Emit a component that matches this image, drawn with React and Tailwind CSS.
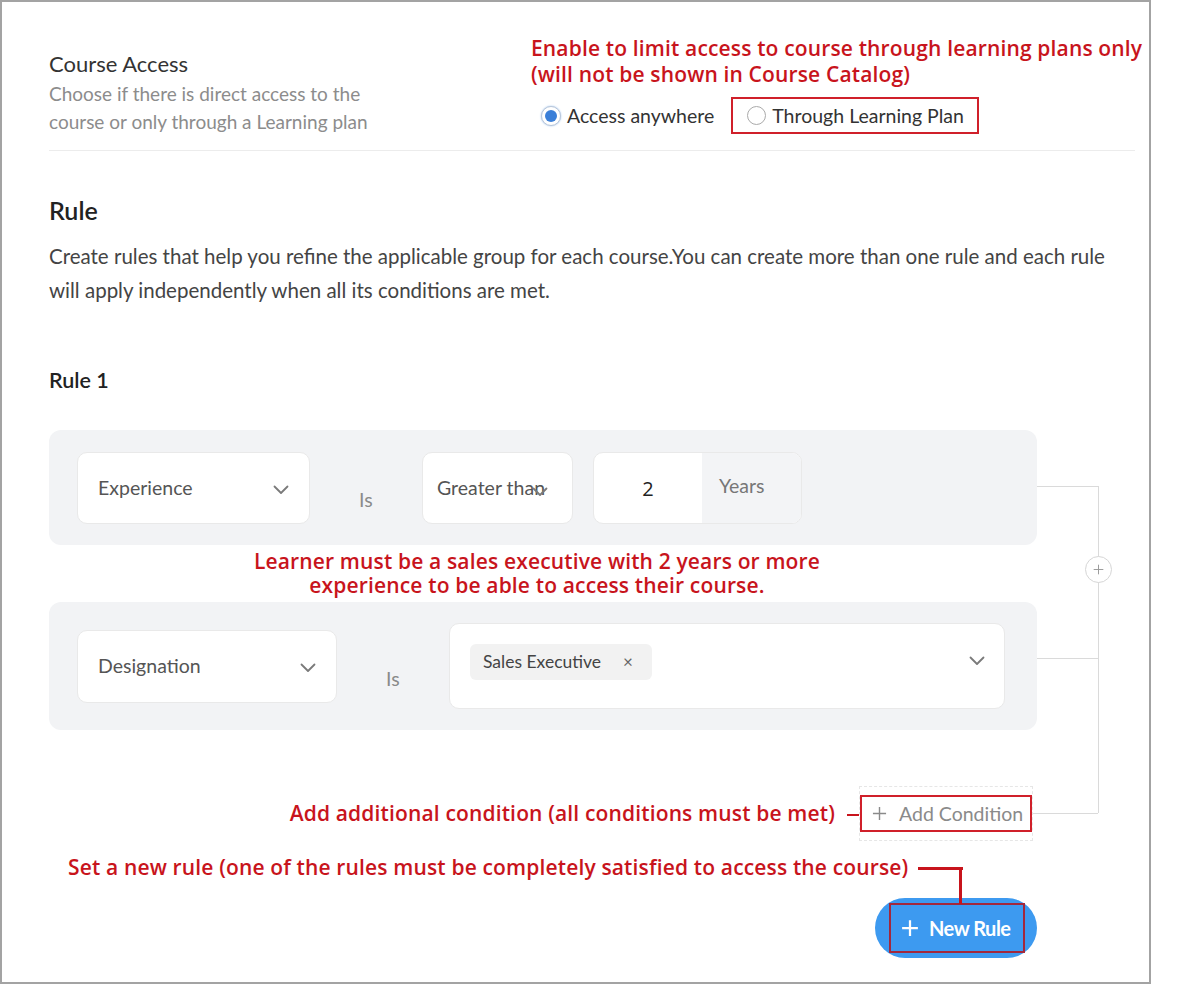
import React from 'react';

const Chevron = ({ className = '' }) => (
  <svg width="16" height="10" viewBox="0 0 16 10" fill="none" className={className}>
    <path d="M1.5 1.5 8 8l6.5-6.5" stroke="#7a7a7a" strokeWidth="1.8" strokeLinecap="round" strokeLinejoin="round" />
  </svg>
);

const Plus = ({ size, color, stroke }) => (
  <svg width={size} height={size} viewBox="0 0 16 16" fill="none">
    <path d="M8 1v14M1 8h14" stroke={color} strokeWidth={stroke} />
  </svg>
);

const Select = ({ label, className = '' }) => (
  <div
    className={`flex h-[72px] items-center justify-between rounded-[10px] border border-[#e9e9e9] bg-white pl-[20px] pr-[20px] ${className}`}
  >
    <span className="text-[19.5px] text-[#555]">{label}</span>
    <Chevron className="mt-[4px] shrink-0" />
  </div>
);

const IsLabel = () => (
  <div className="w-[112px] pl-[49px] pt-[25px] text-[19.5px] text-[#8a8a8a]">Is</div>
);

export default function App() {
  return (
    <div className="h-[984px] w-[1188px] bg-white font-['Lato',sans-serif]">
      <div className="h-[984px] w-[1151px] border-2 border-[#a3a3a3] pl-[47px] pt-[33px]">
        {/* Course access */}
        <div className="flex">
          <div className="w-[482px] pt-[15px]">
            <h3 className="text-[22px] leading-[28px] text-[#333]">Course Access</h3>
            <p className="mt-[2px] text-[19px] leading-[28px] text-[#8c8c8c]">
              Choose if there is direct access to the
              <br />
              course or only through a Learning plan
            </p>
          </div>
          <div>
            <p className="font-['Open_Sans',sans-serif] text-[21px] font-semibold leading-[26px] tracking-[0.15px] text-[#c8141c]">
              Enable to limit access to course through learning plans only
              <br />
              (will not be shown in Course Catalog)
            </p>
            <div className="mt-[10px] flex h-[37px] items-center">
              <label className="ml-[10px] flex items-center gap-[6px]">
                <span className="flex h-[20px] w-[20px] items-center justify-center rounded-full border border-[#b9c6d8] bg-white shadow-[0_0_2px_#9cc0ee]">
                  <span className="h-[12px] w-[12px] rounded-full bg-[#3b7fd8]" />
                </span>
                <span className="text-[19.5px] text-[#333]">Access anywhere</span>
              </label>
              <label className="ml-[17px] flex h-[37px] w-[248px] items-center gap-[6px] border-2 border-[#d0202a] pl-[14px]">
                <span className="h-[19px] w-[19px] rounded-full border border-[#aaa] bg-white" />
                <span className="text-[19.5px] text-[#333]">Through Learning Plan</span>
              </label>
            </div>
          </div>
        </div>
        <div className="mt-[14px] h-px w-[1086px] bg-[#ececec]" />

        {/* Rule */}
        <h2 className="mt-[44px] text-[25px] font-semibold leading-[30px] text-[#222]">Rule</h2>
        <p className="mt-[14px] w-[1086px] text-[20.5px] leading-[34px] text-[#444]">
          Create rules that help you refine the applicable group for each course.You can create more than one rule and each rule
          <br />
          will apply independently when all its conditions are met.
        </p>
        <h3 className="mt-[59px] text-[21.5px] font-semibold leading-[28px] text-[#222]">Rule 1</h3>

        <div className="relative mt-[36px]">
          {/* condition 1 */}
          <div className="flex h-[115px] w-[988px] items-center rounded-[12px] bg-[#f2f3f5] pl-[28px]">
            <Select label="Experience" className="w-[233px]" />
            <IsLabel />
            <div className="relative flex h-[72px] w-[151px] items-center rounded-[10px] border border-[#e9e9e9] bg-white pl-[14px]">
              <span className="whitespace-nowrap text-[19.5px] text-[#555]">Greater than</span>
              <Chevron className="absolute right-[24px] top-[34px]" />
            </div>
            <div className="ml-[20px] flex h-[72px] w-[209px] overflow-hidden rounded-[10px] border border-[#e9e9e9] bg-white">
              <div className="flex w-[108px] items-center justify-center pt-[3px] font-['Open_Sans',sans-serif] text-[20px] text-[#222]">
                2
              </div>
              <div className="flex-1 bg-[#f3f4f6] pl-[17px] pt-[20px] text-[19.5px] leading-[26px] text-[#777]">Years</div>
            </div>
          </div>

          <p className="mt-[4px] w-[976px] text-center font-['Open_Sans',sans-serif] text-[21px] font-semibold leading-[24px] tracking-[0.15px] text-[#c8141c]">
            Learner must be a sales executive with 2 years or more
            <br />
            experience to be able to access their course.
          </p>

          {/* condition 2 */}
          <div className="mt-[5px] flex h-[128px] w-[988px] items-center rounded-[12px] bg-[#f2f3f5] pl-[28px]">
            <Select label="Designation" className="h-[73px] w-[260px]" />
            <IsLabel />
            <div className="flex h-[86px] w-[556px] justify-between rounded-[10px] border border-[#e9e9e9] bg-white pl-[20px] pr-[19px] pt-[20px]">
              <div className="flex h-[36px] w-[182px] items-center rounded-[6px] bg-[#f2f2f2] pl-[13px]">
                <span className="text-[17.5px] text-[#444]">Sales Executive</span>
                <span className="ml-[22px] text-[17px] text-[#666]">×</span>
              </div>
              <Chevron className="mt-[12px]" />
            </div>
          </div>

          {/* add condition */}
          <div className="mt-[56px] flex w-[984px] items-center justify-end">
            <span className="font-['Open_Sans',sans-serif] text-[21px] font-semibold tracking-[0.15px] text-[#c8141c]">
              Add additional condition (all conditions must be met)
            </span>
            <div className="ml-[12px] mt-[2px] h-[2px] w-[12px] bg-[#c8141c]" />
            <div className="border border-dashed border-[#e6e6e6] py-[8px]">
              <div className="flex h-[37px] w-[172px] items-center border-2 border-[#d0202a] pl-[10px]">
                <Plus size={15} color="#8a8a8a" stroke={1.5} />
                <span className="ml-[12px] text-[19.5px] text-[#8a8a8a]">Add Condition</span>
              </div>
            </div>
          </div>

          {/* connectors */}
          <div className="absolute left-[988px] top-[56px] h-px w-[61px] bg-[#dadada]" />
          <div className="absolute left-[1049px] top-[56px] h-[327px] w-px bg-[#dadada]" />
          <div className="absolute left-[988px] top-[228px] h-px w-[61px] bg-[#dadada]" />
          <div className="absolute left-[984px] top-[383px] h-px w-[65px] bg-[#dadada]" />
          <div className="absolute left-[1036px] top-[126px] flex h-[27px] w-[27px] items-center justify-center rounded-full border border-[#d6d6d6] bg-white">
            <Plus size={11} color="#999" stroke={1.4} />
          </div>
        </div>

        {/* new rule */}
        <div className="mt-[13px] flex items-center pl-[19px]">
          <span className="font-['Open_Sans',sans-serif] text-[21px] font-semibold leading-[26px] tracking-[0.15px] text-[#c8141c]">
            Set a new rule (one of the rules must be completely satisfied to access the course)
          </span>
          <div className="ml-[10px] mt-[2px] h-[3px] w-[45px] bg-[#c8141c]" />
        </div>
        <div className="mt-[18px] flex w-[988px] justify-end">
          <div className="relative flex h-[60px] w-[162px] items-center rounded-full bg-[#3d9af0] pl-[14px]">
            <div className="absolute left-[84px] top-[-29px] h-[35px] w-[3px] bg-[#c8141c]" />
            <div className="flex h-[50px] w-[136px] items-center border-2 border-[#a3283c] pl-[10px]">
              <Plus size={18} color="#fff" stroke={2} />
              <span className="ml-[10px] text-[20px] font-bold tracking-[-0.5px] text-white">New Rule</span>
            </div>
          </div>
        </div>
      </div>
    </div>
  );
}
